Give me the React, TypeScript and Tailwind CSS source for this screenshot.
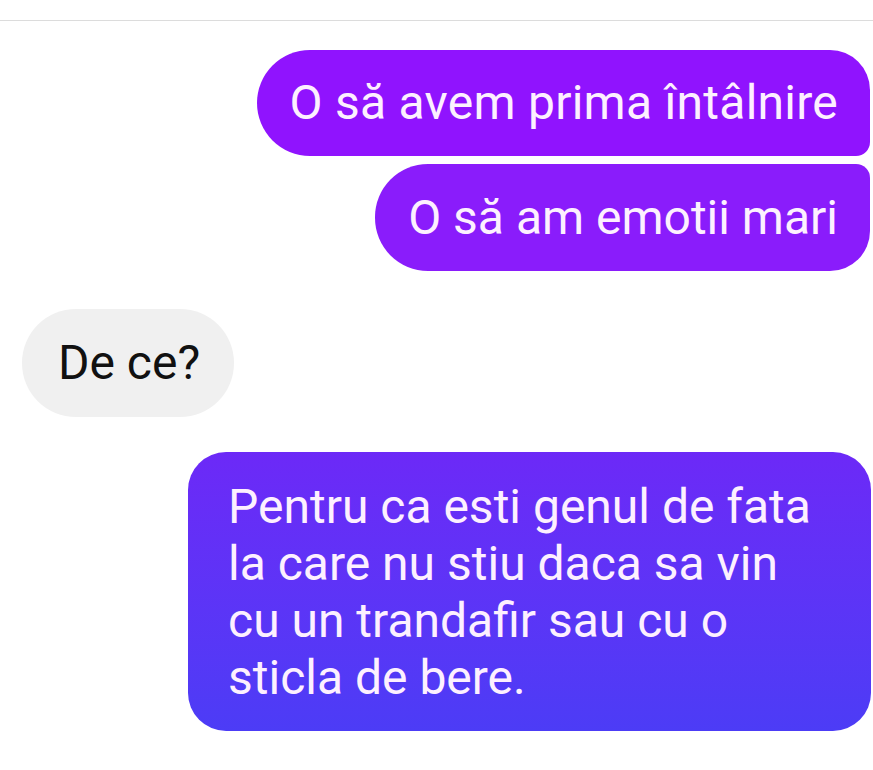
const Bubble = ({
  children,
  className,
}: {
  children: React.ReactNode;
  className: string;
}) => <div className={`flex items-center ${className}`}>{children}</div>;

export default function App() {
  return (
    <div
      className="w-[873px] h-[770px] bg-white overflow-hidden"
      style={{ fontFamily: "Roboto, 'Liberation Sans', sans-serif" }}
    >
      <div className="pt-5">
        <div className="h-px bg-[#dcdcdc]" />
      </div>
      <div className="flex flex-col items-end pr-[3px] pt-[29px]">
        <Bubble className="h-[106px] pl-[33px] pr-[32px] rounded-l-[53px] rounded-tr-[40px] rounded-br-[14px] bg-[#9013fe] text-[#fdf0ff] text-[48px] tracking-[0.25px]">
          O să avem prima întâlnire
        </Bubble>
        <Bubble className="mt-2 h-[107px] pl-[33px] pr-[32px] rounded-l-[53px] rounded-tr-[14px] rounded-br-[40px] bg-[#8a1cfb] text-[#fdf0ff] text-[48px]">
          O să am emotii mari
        </Bubble>
      </div>
      <div className="flex pl-[22px] mt-[38px]">
        <Bubble className="h-[108px] pl-[36px] pr-[34px] rounded-[54px] bg-[#f0f0f0] text-[#111] text-[48px]">
          De ce?
        </Bubble>
      </div>
      <div className="flex justify-end pr-[2px] mt-[35px]">
        <div className="w-[683px] h-[279px] pl-[40px] pr-[20px] pt-[26px] rounded-[38px] bg-gradient-to-b from-[#6c29f7] to-[#4c3cf6] text-[#fdf0ff] text-[48px] leading-[57px]">
          Pentru ca esti genul de fata
          <br />
          la care nu stiu daca sa vin
          <br />
          cu un trandafir sau cu o
          <br />
          sticla de bere.
        </div>
      </div>
    </div>
  );
}
